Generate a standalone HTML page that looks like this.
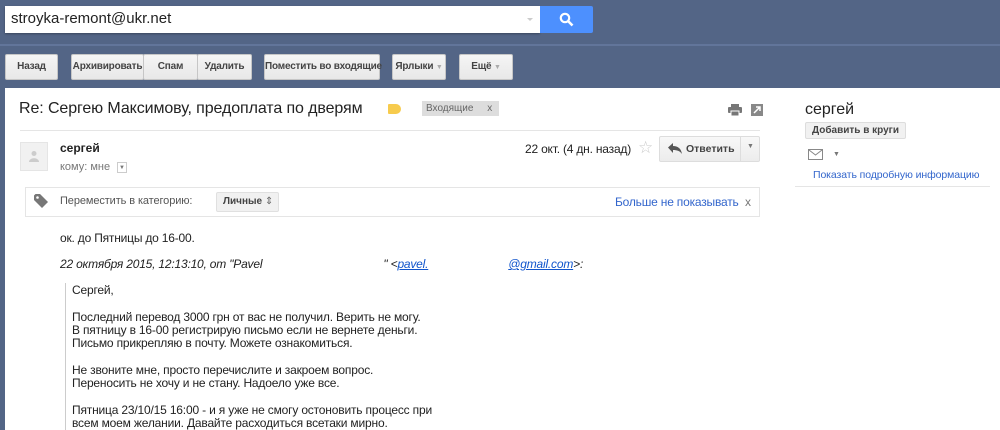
<!DOCTYPE html>
<html><head><meta charset="utf-8"><style>
*{box-sizing:border-box}
body{margin:0;width:1000px;height:430px;overflow:hidden;background:#536586;font-family:"Liberation Sans",Arial,sans-serif;position:relative}
.a{position:absolute}
.btn{position:absolute;top:54px;height:26px;background:linear-gradient(#f5f5f5,#e8e8e8);border:1px solid #c6c6c6;border-radius:2px;font-size:10px;font-weight:bold;color:#444;text-align:center;line-height:24px;white-space:nowrap;letter-spacing:-0.2px}
.t{position:absolute;white-space:nowrap;font-size:12px;color:#222}
</style></head><body>
<div class="a" style="left:5px;top:6px;width:535px;height:27px;background:#fff;box-shadow:0 1px 2px rgba(0,0,0,.3)"></div>
<div class="t" style="left:11px;top:10px;font-size:15px;color:#222">stroyka-remont@ukr.net</div>
<div class="a" style="left:527px;top:18px;border:3px solid transparent;border-top:3px solid #ccc"></div>
<div class="a" style="left:540px;top:6px;width:53px;height:27px;background:#4d90fe;border-radius:0 2px 2px 0"></div>
<svg class="a" style="left:559px;top:12px" width="16" height="16"><circle cx="6" cy="6" r="4.2" stroke="#fff" stroke-width="2.2" fill="none"/><path d="M9 9l4.5 4.5" stroke="#fff" stroke-width="2.6"/></svg>
<div class="a" style="left:0;top:44px;width:1000px;height:2px;background:#62759a"></div>
<div class="btn" style="left:5px;width:53px">Назад</div>
<div class="btn" style="left:71px;width:73px">Архивировать</div>
<div class="btn" style="left:143px;width:55px">Спам</div>
<div class="btn" style="left:197px;width:55px">Удалить</div>
<div class="btn" style="left:264px;width:116px">Поместить во входящие</div>
<div class="btn" style="left:392px;width:54px">Ярлыки <span style="color:#aaa;font-size:7px">▼</span></div>
<div class="btn" style="left:459px;width:54px">Ещё <span style="color:#aaa;font-size:7px">▼</span></div>
<div class="a" style="left:5px;top:88px;width:995px;height:342px;background:#fff"></div>
<div class="t" style="left:19px;top:100px;font-size:16px;color:#222;letter-spacing:-0.1px">Re: Сергею Максимову, предоплата по дверям</div>
<div class="a" style="left:388px;top:104px;width:13px;height:10px;background:#f7cb4d;border-radius:1px 5px 5px 1px"></div>
<div class="a" style="left:422px;top:101px;width:77px;height:15px;background:#ddd;font-size:10px;color:#666;line-height:15px;padding-left:4px;white-space:nowrap">Входящие &nbsp;&nbsp;&nbsp;&nbsp;x</div>
<svg class="a" style="left:728px;top:104px" width="14" height="12"><rect x="3" y="0" width="8" height="3" fill="#777"/><rect x="0" y="3" width="14" height="6" rx="1" fill="#777"/><rect x="3" y="7" width="8" height="5" fill="#777" stroke="#fff"/></svg>
<svg class="a" style="left:751px;top:104px" width="12" height="12"><rect width="12" height="12" fill="#888"/><path d="M3 9L9 3M5 3h4v4" stroke="#fff" stroke-width="1.5" fill="none"/></svg>
<div class="a" style="left:20px;top:130px;width:740px;height:1px;background:#e5e5e5"></div>
<div class="a" style="left:20px;top:142px;width:28px;height:29px;background:#f1f1f1;border:1px solid #e5e5e5"></div>
<svg class="a" style="left:29px;top:150px" width="10" height="12"><circle cx="5" cy="3.5" r="2.5" fill="#ccc"/><path d="M0 12c0-5 10-5 10 0z" fill="#ccc"/></svg>
<div class="t" style="left:60px;top:141px;font-weight:bold;font-size:12px">сергей</div>
<div class="t" style="left:60px;top:161px;color:#777;font-size:11px">кому: мне</div>
<div class="a" style="left:117px;top:162px;width:10px;height:11px;border:1px solid #ccc;font-size:6px;color:#777;text-align:center;line-height:10px">▼</div>
<div class="t" style="left:525px;top:142px;color:#222;font-size:12px;letter-spacing:-0.2px">22 окт. (4 дн. назад)</div>
<div class="t" style="left:638px;top:138px;color:#ccc;font-size:17px">☆</div>
<div class="a" style="left:659px;top:136px;width:101px;height:26px;background:linear-gradient(#f8f8f8,#ececec);border:1px solid #ddd;border-radius:2px"></div>
<div class="a" style="left:740px;top:136px;width:1px;height:26px;background:#ddd"></div>
<svg class="a" style="left:668px;top:143px" width="14" height="11"><path d="M0 4.5L5 0v3c5 0 8 2.5 9 8-2-3-5-4-9-4v3z" fill="#555"/></svg>
<div class="t" style="left:686px;top:143px;font-size:10.5px;font-weight:bold;color:#444">Ответить</div>
<div class="t" style="left:747px;top:143px;font-size:7px;color:#777">▼</div>
<div class="a" style="left:25px;top:187px;width:735px;height:30px;border:1px solid #e5e5e5"></div>
<svg class="a" style="left:34px;top:194px" width="14" height="14"><path d="M0 1.5V6l8 8 6-6-8-8H1.5z" fill="#777"/><circle cx="3.5" cy="3.5" r="1.3" fill="#fff"/></svg>
<div class="t" style="left:60px;top:195px;font-size:11px;color:#555;letter-spacing:-0.1px">Переместить в категорию:</div>
<div class="a" style="left:216px;top:192px;width:63px;height:20px;background:#f1f1f1;border:1px solid #e0e0e0;border-radius:2px;font-size:10px;font-weight:bold;color:#444;line-height:18px;padding-left:6px;white-space:nowrap">Личные <span style="color:#666;font-weight:normal">⇕</span></div>
<div class="t" style="left:615px;top:195px;font-size:12px;color:#3366cc;letter-spacing:-0.2px">Больше не показывать</div>
<div class="t" style="left:745px;top:195px;font-size:12px;color:#777">x</div>
<div class="t" style="left:60px;top:231px;letter-spacing:-0.2px">ок. до Пятницы до 16-00.</div>
<div class="t" style="left:60px;top:257px;font-style:italic;letter-spacing:-0.2px">22 октября 2015, 12:13:10, от "Pavel <span style="display:inline-block;width:118px"></span>" &lt;<span style="color:#15c;text-decoration:underline">pavel.</span><span style="display:inline-block;width:80px"></span><span style="color:#15c;text-decoration:underline">@gmail.com</span>&gt;:</div>
<div class="a" style="left:65px;top:283px;width:1px;height:147px;background:#ccc"></div>
<div class="t" style="left:72px;top:284px;line-height:13.3px;letter-spacing:-0.18px">Сергей,<br><br>Последний перевод 3000 грн от вас не получил. Верить не могу.<br>В пятницу в 16-00 регистрирую письмо если не вернете деньги.<br>Письмо прикрепляю в почту. Можете ознакомиться.<br><br>Не звоните мне, просто перечислите и закроем вопрос.<br>Переносить не хочу и не стану. Надоело уже все.<br><br>Пятница 23/10/15 16:00 - и я уже не смогу остоновить процесс при<br>всем моем желании. Давайте расходиться всетаки мирно.</div>
<div class="t" style="left:805px;top:101px;font-size:16px;color:#222">сергей</div>
<div class="a" style="left:805px;top:122px;width:101px;height:17px;background:#f1f1f1;border:1px solid #ddd;border-radius:2px;font-size:10px;font-weight:bold;color:#444;text-align:center;line-height:15px;white-space:nowrap">Добавить в круги</div>
<svg class="a" style="left:808px;top:149px" width="15" height="11"><rect x=".5" y=".5" width="14" height="10" fill="none" stroke="#888"/><path d="M1 1l6.5 5L14 1" fill="none" stroke="#888"/></svg>
<div class="t" style="left:833px;top:151px;font-size:7px;color:#777">▼</div>
<div class="t" style="left:813px;top:169px;font-size:10.5px;color:#3366cc;letter-spacing:-0.1px">Показать подробную информацию</div>
<div class="a" style="left:795px;top:186px;width:195px;height:1px;background:#e5e5e5"></div>
</body></html>
